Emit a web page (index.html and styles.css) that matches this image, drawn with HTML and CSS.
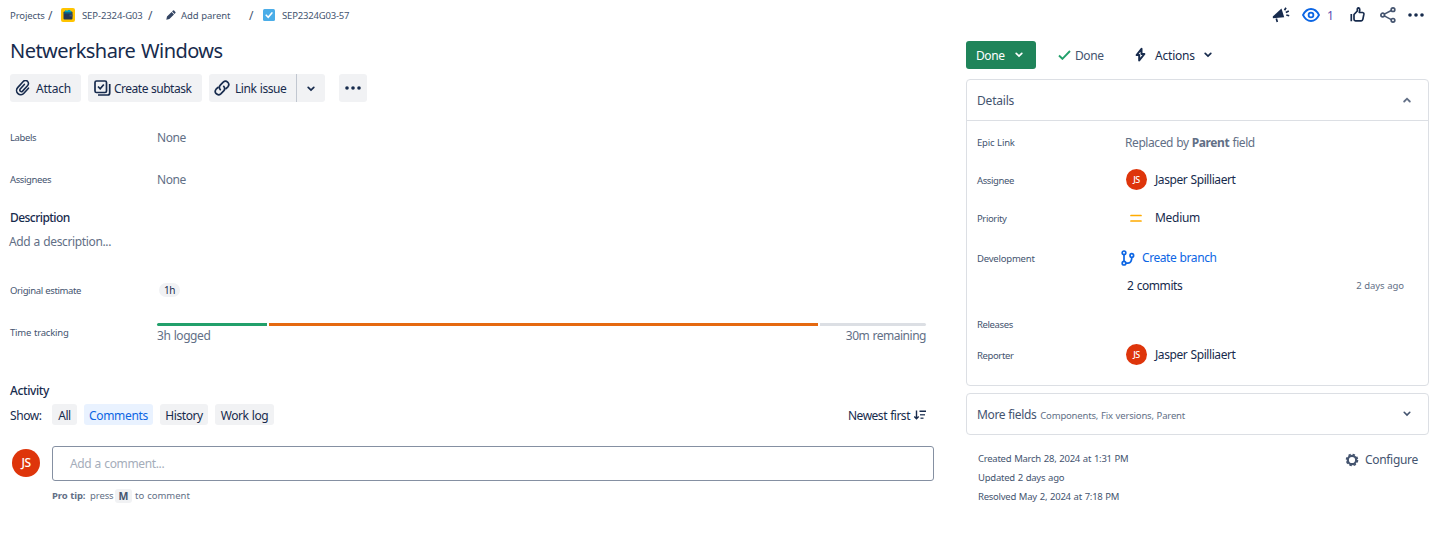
FILE: index.html
```
<!DOCTYPE html>
<html lang="en">
<head>
<meta charset="utf-8">
<title>Netwerkshare Windows</title>
<link rel="stylesheet" href="styles.css">
</head>
<body>
<header class="topbar">
  <nav class="crumbs">
    <span class="crumb projects">Projects</span><span class="slash">/</span>
    <svg class="project-icon" viewBox="0 0 14 14"><rect width="14" height="14" rx="2" fill="#ffc400"/><rect x="2.500" y="3.500" width="9" height="8" rx="1" fill="#253858"/><path d="M3.500 4.500 4.500 2l1.500.7L8 1.700l1.800 1 .9 1.800z" fill="#00a3bf"/><path d="M3 5.200h8" stroke="#0b6380"/><rect x="8.500" y="6.500" width="3" height="2" fill="#42526e"/></svg>
    <span class="crumb key">SEP-2324-G03</span><span class="slash">/</span>
    <svg class="pencil" viewBox="0 0 10 10"><path d="M.3 9.700 1 6.600 5.600 2l2.400 2.400L3.400 9zM6.100 1.500l.9-.9q.5-.5 1.100 0l1.300 1.300q.5.600 0 1.100l-.9.900z" fill="#344563"/></svg>
    <span class="crumb parent">Add parent</span><span class="slash">/</span>
    <svg class="task-icon" viewBox="0 0 12 12"><rect width="12" height="12" rx="1.500" fill="#4bade8"/><path d="m3.200 6.200 2 2 3.700-4.300" fill="none" stroke="#fff" stroke-width="1.600" stroke-linecap="round"/></svg>
    <span class="crumb issue">SEP2324G03-57</span>
  </nav>
  <div class="tools">
    <svg class="horn" viewBox="0 0 18 16"><path d="M.8 9.600 9.500 1.500l2.700 8.800L.9 11.300z" fill="#172b4d"/><path d="m4.300 11.500 1 3.600M12.500 3.200l1.500-2.400M13.800 5.500l3-1.500M14.300 8l2.900.8" fill="none" stroke="#172b4d" stroke-width="1.700"/></svg>
    <svg class="eye" viewBox="0 0 18 14"><path d="M1 7q3-6 8-6t8 6q-3 6-8 6T1 7z" fill="none" stroke="#0c66e4" stroke-width="1.800"/><circle cx="9" cy="7" r="2.400" fill="none" stroke="#0c66e4" stroke-width="1.800"/></svg>
    <span class="watchers">1</span>
    <svg class="thumb" viewBox="0 0 15 15"><path d="M1.300 7v7.200M4 7.500 7.300 4V1.800q.2-1 1.200-.9 1.300.2 1.300 2L9.300 5.500h3.300q1.500.2 1.300 1.700l-1 5q-.3 1.600-1.700 1.600H5.500q-1.500 0-1.500-1.500z" fill="none" stroke="#172b4d" stroke-width="1.700" stroke-linejoin="round"/></svg>
    <svg class="share" viewBox="0 0 16 16"><path d="m4.300 7.100 7-3.600m-7 5.300 7 3.800" stroke="#44546f" stroke-width="1.500"/><g fill="#fff" stroke="#44546f" stroke-width="1.700"><circle cx="2.700" cy="8" r="1.800"/><circle cx="13" cy="2.700" r="1.800"/><circle cx="13" cy="13.300" r="1.800"/></g></svg>
    <svg class="dots" viewBox="0 0 16 4"><g fill="#172b4d"><circle cx="2" cy="2" r="1.800"/><circle cx="8" cy="2" r="1.800"/><circle cx="14" cy="2" r="1.800"/></g></svg>
  </div>
</header>
<div class="columns">
<main class="main">
  <h1 class="title">Netwerkshare Windows</h1>
  <div class="actions">
    <button class="btn attach"><svg class="clip" viewBox="0 0 16 16"><g transform="rotate(42 8 8)"><path d="M12.200 4.500v6.800a4.200 4.200 0 0 1-8.400 0V3a3 3 0 0 1 6 0v7.600a1.600 1.600 0 0 1-3.200 0V4.500" fill="none" stroke="#172b4d" stroke-width="1.600" stroke-linecap="round"/></g></svg><span>Attach</span></button>
    <button class="btn subtask"><svg class="sub" viewBox="0 0 17 16"><rect x="1" y="1" width="11.500" height="11.500" rx="1.500" fill="none" stroke="#172b4d" stroke-width="1.700"/><path d="m4 6.500 2.200 2.300L9.800 4.500M15.700 4v9q0 2-2 2H4" fill="none" stroke="#172b4d" stroke-width="1.700"/></svg><span>Create subtask</span></button>
    <button class="btn link"><svg class="chain" viewBox="0 0 16 16"><g fill="none" stroke="#172b4d" stroke-width="1.700" stroke-linecap="round"><path d="M6.300 9.700q-2-2.400 0-4.600l2.900-2.900q2.300-2 4.600.1 2 2.200.1 4.500L12 8.600"/><path d="M9.700 6.300q2 2.400 0 4.600l-2.900 2.900q-2.300 2-4.600-.1-2-2.200-.1-4.500L4 7.400"/></g></svg><span>Link issue</span></button>
    <button class="btn drop"><svg class="chev" viewBox="0 0 8 6"><path d="m1.200 1.300 2.800 2.800 2.800-2.800" fill="none" stroke="#172b4d" stroke-width="1.700" stroke-linecap="round"/></svg></button>
    <button class="btn more"><svg class="dots" viewBox="0 0 16 4"><g fill="#172b4d"><circle cx="2" cy="2" r="1.800"/><circle cx="8" cy="2" r="1.800"/><circle cx="14" cy="2" r="1.800"/></g></svg></button>
  </div>
  <div class="fields">
    <div class="row"><span class="label">Labels</span><span class="muted">None</span></div>
    <div class="row"><span class="label">Assignees</span><span class="muted">None</span></div>
  </div>
  <h2 class="heading desc">Description</h2>
  <p class="muted add-desc">Add a description...</p>
  <div class="row"><span class="label low">Original estimate</span><span class="chip">1h</span></div>
  <div class="row"><span class="label low wide">Time tracking</span>
    <div class="track">
      <div class="bars"><i class="bar logged"></i><i class="bar over"></i><i class="bar left"></i></div>
      <div class="legend"><span>3h logged</span><span class="remaining">30m remaining</span></div>
    </div>
  </div>
  <h2 class="heading activity">Activity</h2>
  <div class="filters">
    <span class="show">Show:</span>
    <button class="tab all">All</button><button class="tab comments">Comments</button><button class="tab history">History</button><button class="tab worklog">Work log</button>
    <span class="newest">Newest first</span>
    <svg class="sort" viewBox="0 0 12 10"><path d="M2.500.5v8M.3 6.500l2.200 2.200 2.200-2.200M5.500 1.300H12" fill="none" stroke="#172b4d" stroke-width="1.400"/><path d="M6 4.800h5M6.500 8.300h3" stroke="#44546f" stroke-width="1.400"/></svg>
  </div>
  <div class="comment"><span class="avatar big">JS</span><div class="input"><span>Add a comment...</span></div></div>
  <p class="tip"><b>Pro tip:</b><span class="press">press</span><kbd>M</kbd><span class="to">to comment</span></p>
</main>
<aside class="side">
  <div class="status">
    <button class="done"><span>Done</span><svg class="chev" viewBox="0 0 8 6"><path d="m1.200 1.300 2.800 2.800 2.800-2.800" fill="none" stroke="#fff" stroke-width="1.700" stroke-linecap="round"/></svg></button>
    <svg class="check" viewBox="0 0 13 10"><path d="m1 5.500 3.400 3.300L12 1" fill="none" stroke="#22a06b" stroke-width="1.900"/></svg><span class="resolution">Done</span>
    <svg class="bolt" viewBox="0 0 12 16"><path d="M6.500 1.800 1.600 8h2.600v5.500L9.400 7H6.500z" fill="none" stroke="#172b4d" stroke-width="2" stroke-linejoin="round"/></svg><span class="act">Actions</span>
    <svg class="chev" viewBox="0 0 8 6"><path d="m1.200 1.300 2.800 2.800 2.800-2.800" fill="none" stroke="#172b4d" stroke-width="1.700" stroke-linecap="round"/></svg>
  </div>
  <section class="panel details">
    <div class="panel-head"><span>Details</span><svg class="chev" viewBox="0 0 8 6"><path d="m1.200 4.500 2.800-2.800 2.800 2.800" fill="none" stroke="#626f86" stroke-width="1.800" stroke-linecap="round"/></svg></div>
    <div class="grid">
      <span class="label wide">Epic Link</span><span class="muted">Replaced by <b>Parent</b> field</span>
      <span class="label low">Assignee</span><span class="person"><span class="avatar">JS</span><span>Jasper Spilliaert</span></span>
      <span class="label low">Priority</span><span class="person"><svg class="prio" viewBox="0 0 12 9"><path d="M1 1.500h10M1 7h10" stroke="#ffab00" stroke-width="1.700" stroke-linecap="round"/></svg><span class="medium">Medium</span></span>
      <span class="label wide low">Development</span><span class="branch"><svg viewBox="0 0 14 16"><g fill="none" stroke="#0c66e4" stroke-width="1.700"><circle cx="3" cy="2.800" r="1.800"/><circle cx="3" cy="13.200" r="1.800"/><circle cx="10.800" cy="5.500" r="1.800"/><path d="M3 4.600v6.800M4.800 13.200H7q3.800-.2 3.800-5.900"/></g></svg><span>Create branch</span></span>
      <span></span><span class="commits"><span>2 commits</span><span class="ago">2 days ago</span></span>
      <span class="label low">Releases</span><span></span>
      <span class="label low">Reporter</span><span class="person"><span class="avatar">JS</span><span>Jasper Spilliaert</span></span>
    </div>
  </section>
  <section class="panel fields-more"><span class="mf">More fields</span><span class="mf-list">Components, Fix versions, Parent</span><svg class="chev" viewBox="0 0 8 6"><path d="m1.200 1.300 2.800 2.800 2.800-2.800" fill="none" stroke="#44546f" stroke-width="1.600" stroke-linecap="round"/></svg></section>
  <footer class="meta">
    <div class="dates"><span>Created March 28, 2024 at 1:31 PM</span><span>Updated 2 days ago</span><span>Resolved May 2, 2024 at 7:18 PM</span></div>
    <div class="configure"><svg viewBox="0 0 14 14"><circle cx="7" cy="7" r="4.200" fill="none" stroke="#44546f" stroke-width="2.200"/><circle cx="7" cy="7" r="5.500" fill="none" stroke="#44546f" stroke-width="1.600" stroke-dasharray="2.400 1.920"/></svg><span>Configure</span></div>
  </footer>
</aside>
</div>
</body>
</html>
```
FILE: styles.css
```
* { box-sizing: border-box; }
body { margin: 0; background: #fff; color: #172b4d; font: 12px/16px "Noto Sans", "Open Sans", sans-serif; letter-spacing: -0.42px; word-spacing: 0.5px; white-space: nowrap; overflow: hidden; }
button { border: 0; padding: 0; margin: 0; font: inherit; letter-spacing: inherit; word-spacing: inherit; color: inherit; text-align: left; }
h1, h2, p { margin: 0; font-weight: 400; }
svg { display: block; flex: none; }
.topbar { display: flex; justify-content: space-between; height: 30px; padding: 0 14px 0 10px; }
.crumbs { display: flex; align-items: center; height: 30px; font-size: 9.5px; letter-spacing: -0.1px; color: #44546f; }
.crumbs span { padding-top: 2px; }
.projects { width: 38px; }
.slash { width: 13px; font-size: 12px; }
.project-icon { width: 14px; height: 14px; margin-right: 7px; }
.key { width: 66px; }
.key + .slash { width: 18px; }
.pencil { width: 10px; height: 10px; margin-right: 5px; }
.parent { width: 68px; }
.parent + .slash { width: 14px; }
.task-icon { width: 12px; height: 12px; margin-right: 7px; }
.issue { letter-spacing: -0.18px; }
.tools { display: flex; align-items: center; height: 29px; }
.horn { width: 18px; height: 16px; }
.eye { width: 18px; height: 14px; margin-left: 12px; }
.watchers { width: 8px; margin: 2px 15px 0 7px; color: #5e4db2; }
.thumb { width: 15px; height: 15px; }
.share { width: 16px; height: 16px; margin: 0 12px 0 15px; }
.dots { width: 16px; height: 4px; }
.columns { display: flex; padding-left: 10px; }
.main { width: 924px; }
.title { height: 44px; font-size: 20px; line-height: 41px; letter-spacing: -0.55px; word-spacing: 1px; }
.actions { display: flex; }
.btn { display: flex; align-items: center; height: 28px; border-radius: 3px; background: #f1f2f4; }
.btn span { padding-top: 2px; }
.attach { width: 71px; padding-left: 5px; margin-right: 7px; letter-spacing: -0.2px; }
.clip { width: 16px; height: 16px; margin-right: 5px; }
.subtask { width: 114px; padding-left: 6px; margin-right: 7px; letter-spacing: -0.5px; }
.sub { width: 17px; height: 16px; margin-right: 3px; }
.link { width: 88px; padding-left: 5px; border-right: 1px solid #c1c7d0; border-radius: 3px 0 0 3px; }
.chain { width: 16px; height: 16px; margin-right: 5px; }
.drop { width: 28px; justify-content: center; margin-right: 14px; padding-top: 1px; border-radius: 0 3px 3px 0; }
.more { width: 28px; justify-content: center; }
.chev { width: 8px; height: 6px; }
.fields { padding-top: 15px; }
.row { display: flex; align-items: center; height: 42px; }
.label { width: 147px; font-size: 9.5px; letter-spacing: -0.38px; color: #44546f; }
.low { padding-top: 2px; }
.wide { letter-spacing: -0.2px; }
.muted { color: #626f86; }
.heading { font-size: 12px; font-weight: 500; line-height: 16px; letter-spacing: -0.55px; }
.desc { margin-top: 9px; }
.add-desc { margin: 8px 0 19px -1px; letter-spacing: -0.36px; }
.chip { width: 21px; height: 14px; margin-left: 2px; padding-left: 5px; border-radius: 7px; background: #f1f2f4; font-size: 10px; line-height: 14px; }
.track { width: 769px; padding-top: 2px; color: #626f86; }
.bars { display: grid; grid-template-columns: 110px 549px 106px; gap: 2px; }
.bar { height: 3px; }
.logged { background: #22a06b; border-radius: 2px 0 0 2px; }
.over { background: #e56910; }
.left { background: #dcdfe4; border-radius: 0 2px 2px 0; }
.legend { display: flex; justify-content: space-between; padding-top: 2px; }
.remaining, .newest { letter-spacing: -0.48px; }
.activity { margin-top: 30px; letter-spacing: -0.4px; }
.filters { display: flex; align-items: center; height: 21px; margin-top: 5px; padding-right: 8px; }
.show { width: 42px; padding-top: 2px; }
.tab { height: 21px; margin-right: 7px; padding-top: 2px; border-radius: 3px; background: #f1f2f4; text-align: center; }
.all { width: 25px; }
.comments { width: 69px; background: #e9f2ff; color: #0c66e4; letter-spacing: -0.3px; }
.history { width: 48px; }
.worklog { width: 59px; }
.newest { margin-left: auto; padding-top: 2px; }
.sort { width: 12px; height: 10px; margin-left: 4px; }
.comment { display: flex; align-items: center; height: 35px; margin-top: 21px; padding: 0 0 0 2px; }
.avatar { display: grid; place-items: center; flex: none; width: 21px; height: 21px; border-radius: 50%; background: #de350b; color: #fff; font-size: 9px; line-height: 12px; font-weight: 500; }
.big { width: 28px; height: 28px; margin: 0 12px 1px 0; font-size: 12px; }
.input { display: flex; align-items: center; width: 882px; height: 35px; padding: 1px 0 0 17px; border: 1px solid #8590a2; border-radius: 3px; color: #a5adba; letter-spacing: -0.36px; }
.tip { display: flex; align-items: center; height: 16px; margin: 7px 0 0 42px; font-size: 9.5px; letter-spacing: 0; color: #626f86; }
.tip b { width: 38px; letter-spacing: -0.15px; }
.press { width: 25px; letter-spacing: -0.1px; }
kbd { width: 17px; height: 14px; margin-right: 3px; border-radius: 3px; background: #f1f2f4; color: #44546f; font: bold 10.5px/14px "Noto Sans", sans-serif; text-align: center; }
.side { width: 463px; margin-left: 32px; padding-top: 11px; }
.status { display: flex; align-items: center; height: 28px; margin-bottom: 10px; }
.status span { padding-top: 2px; }
.done { display: flex; align-items: center; justify-content: space-between; width: 70px; height: 28px; margin-right: 22px; padding: 0 13px 0 10px; border-radius: 3px; background: #1f845a; color: #fff; }
.check { width: 13px; height: 10px; margin-right: 4px; }
.resolution { width: 60px; color: #44546f; }
.bolt { width: 12px; height: 16px; margin-right: 8px; }
.act { width: 49px; letter-spacing: -0.2px; }
.panel { border: 1px solid #dcdfe4; border-radius: 4px; }
.details { height: 307px; }
.panel-head { display: flex; align-items: center; justify-content: space-between; height: 41px; padding: 0 17px 0 10px; border-bottom: 1px solid #dcdfe4; color: #44546f; }
.panel-head span { padding-top: 2px; letter-spacing: -0.2px; }
.grid { display: grid; grid-template-columns: 148px 1fr; grid-template-rows: 37px 37px 40px 40px 15px 61px 1px; align-items: center; padding: 3px 24px 0 10px; }
.person { display: flex; align-items: center; padding-left: 1px; }
.person .avatar { margin-right: 8px; }
.prio { width: 12px; height: 9px; margin: 0 13px 0 4px; }
.medium { letter-spacing: -0.3px; }
.branch { display: flex; align-items: center; margin-left: -4px; color: #0c66e4; }
.branch svg { width: 14px; height: 16px; margin-right: 7px; }
.commits { display: flex; justify-content: space-between; padding-left: 2px; }
.ago { font-size: 9.5px; letter-spacing: -0.1px; color: #626f86; }
.fields-more { display: flex; align-items: center; height: 42px; margin-top: 7px; padding: 0 17px 0 10px; color: #44546f; }
.mf { padding-top: 2px; letter-spacing: -0.38px; }
.mf-list { margin-left: 4px; padding-top: 3px; font-size: 9.5px; letter-spacing: -0.18px; color: #626f86; }
.fields-more .chev { margin-left: auto; }
.meta { display: flex; justify-content: space-between; padding: 14px 11px 0 12px; color: #44546f; }
.dates { display: grid; grid-auto-rows: 19px; align-items: center; font-size: 9.5px; letter-spacing: -0.25px; word-spacing: 0.6px; }
.configure { display: flex; align-items: center; height: 22px; letter-spacing: -0.3px; }
.configure svg { width: 14px; height: 14px; margin-right: 6px; }
```
